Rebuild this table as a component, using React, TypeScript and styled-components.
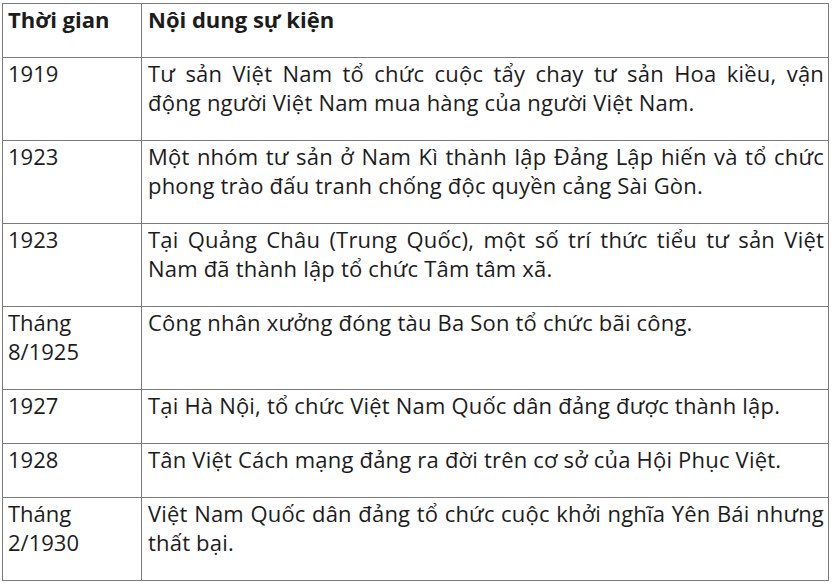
import styled, { createGlobalStyle } from "styled-components";

type Row = {
  time: string[];
  event: string;
};

const ROWS: Row[] = [
  {
    time: ["1919"],
    event:
      "Tư sản Việt Nam tổ chức cuộc tẩy chay tư sản Hoa kiều, vận động người Việt Nam mua hàng của người Việt Nam.",
  },
  {
    time: ["1923"],
    event:
      "Một nhóm tư sản ở Nam Kì thành lập Đảng Lập hiến và tổ chức phong trào đấu tranh chống độc quyền cảng Sài Gòn.",
  },
  {
    time: ["1923"],
    event:
      "Tại Quảng Châu (Trung Quốc), một số trí thức tiểu tư sản Việt Nam đã thành lập tổ chức Tâm tâm xã.",
  },
  {
    time: ["Tháng", "8/1925"],
    event: "Công nhân xưởng đóng tàu Ba Son tổ chức bãi công.",
  },
  {
    time: ["1927"],
    event: "Tại Hà Nội, tổ chức Việt Nam Quốc dân đảng được thành lập.",
  },
  {
    time: ["1928"],
    event: "Tân Việt Cách mạng đảng ra đời trên cơ sở của Hội Phục Việt.",
  },
  {
    time: ["Tháng", "2/1930"],
    event:
      "Việt Nam Quốc dân đảng tổ chức cuộc khởi nghĩa Yên Bái nhưng thất bại.",
  },
];

const GlobalStyle = createGlobalStyle`
  html, body {
    margin: 0;
    padding: 0;
    background: #ffffff;
  }
  body {
    font-family: "Open Sans", "Noto Sans", sans-serif;
    color: #1c1c1c;
  }
`;

const Page = styled.div`
  padding: 3px 0 0 2px;
`;

const Table = styled.table`
  width: 827px;
  border-collapse: collapse;
  table-layout: fixed;
  font-size: 22px;
  line-height: 29px;
`;

const Cell = styled.td<{ $first?: boolean; $head?: boolean }>`
  border: 1px solid #7b7b7b;
  vertical-align: top;
  width: ${(p) => (p.$first ? "129px" : "auto")};
  padding: 1px 4px 23px ${(p) => (p.$first ? "5px" : "6px")};
  font-weight: ${(p) => (p.$head ? 700 : 400)};
  letter-spacing: ${(p) => (p.$first || p.$head ? "0" : "0.2px")};
  text-align: ${(p) => (p.$first || p.$head ? "left" : "justify")};
`;

const TimeLine = styled.div`
  display: block;
`;

const App = () => {
  return (
    <>
      <GlobalStyle />
      <Page>
        <Table>
          <tbody>
            <tr>
              <Cell $first $head>
                Thời gian
              </Cell>
              <Cell $head>Nội dung sự kiện</Cell>
            </tr>
            {ROWS.map((row, i) => (
              <tr key={i}>
                <Cell $first>
                  {row.time.map((t) => (
                    <TimeLine key={t}>{t}</TimeLine>
                  ))}
                </Cell>
                <Cell>{row.event}</Cell>
              </tr>
            ))}
          </tbody>
        </Table>
      </Page>
    </>
  );
};

export default App;
